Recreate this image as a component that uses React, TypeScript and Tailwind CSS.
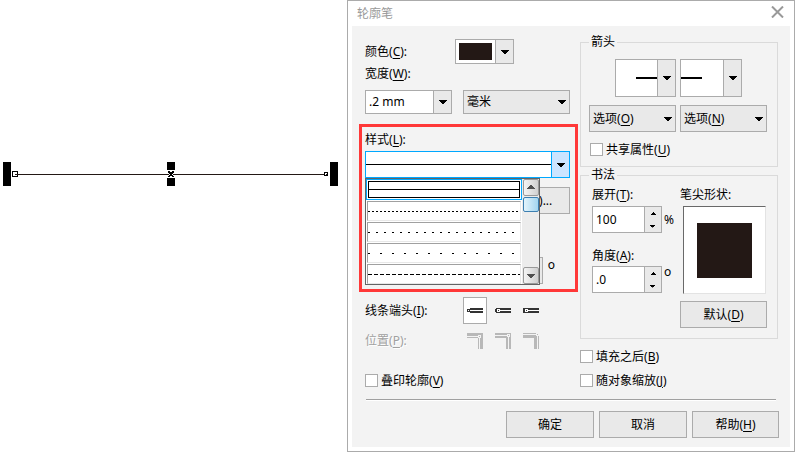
import { useState } from "react";
import type { ReactNode } from "react";

const LINE_STYLES = [
  { id: "solid", dash: "" },
  { id: "fine", dash: "2 2" },
  { id: "dotted", dash: "2 6" },
  { id: "sparse", dash: "2 10" },
  { id: "dashed", dash: "4 2" },
];

// label text with its underlined access key: 颜色(C):
function Key({ text, k, end = "" }: { text: string; k: string; end?: string }) {
  return (
    <span className="whitespace-nowrap">
      {text}(<u className="underline-offset-2">{k}</u>){end}
    </span>
  );
}

function Down() {
  return (
    <svg width="8" height="4" fill="currentColor" shapeRendering="crispEdges" className="shrink-0">
      <path d="M0 0h8v1H7v1H6v1H5v1H3V3H2V2H1V1H0z" />
    </svg>
  );
}

function Up() {
  return (
    <svg width="5" height="3" shapeRendering="crispEdges">
      <path d="M2 0h1v1h1v1h1v1H0V2h1V1h1z" />
    </svg>
  );
}

function DropButton({ label }: { label: string }) {
  return (
    <button
      aria-label={label}
      className="flex w-[18px] shrink-0 items-center justify-center border-l border-[#ababab] bg-[#e9e9e9]"
    >
      <Down />
    </button>
  );
}

function PushButton({ children, className = "" }: { children: ReactNode; className?: string }) {
  return (
    <button className={"h-[27px] border border-[#ababab] bg-[#e9e9e9] " + className}>
      {children}
    </button>
  );
}

function OptionButton({ k }: { k: string }) {
  return (
    <button className="flex h-[27px] items-center justify-between border border-[#ababab] bg-[#e9e9e9] pr-[3px] pl-[3px]">
      <Key text="选项" k={k} />
      <Down />
    </button>
  );
}

function Spinner({ id, value, label }: { id: string; value: string; label?: string }) {
  return (
    <div className="flex h-[27px] w-[70px] border border-[#ababab] bg-white">
      <input
        id={id}
        aria-label={label}
        defaultValue={value}
        className="w-0 flex-1 pl-[3px] outline-none"
      />
      <div className="flex w-[17px] flex-col border-l border-[#ababab] bg-[#e9e9e9]">
        <button aria-label="增加" className="flex flex-1 items-center justify-center">
          <Up />
        </button>
        <button aria-label="减少" className="flex flex-1 rotate-180 items-center justify-center">
          <Up />
        </button>
      </div>
    </div>
  );
}

function Check({ text, k }: { text: string; k: string }) {
  return (
    <label className="flex h-[13px] items-center gap-[3px]">
      <input type="checkbox" className="size-[13px] appearance-none border border-[#ababab] bg-white checked:bg-[#555]" />
      <Key text={text} k={k} />
    </label>
  );
}

function CapIcon({ type }: { type: number }) {
  return (
    <svg width="16" height="5" shapeRendering="crispEdges">
      {type === 0 && <path d="M3 0h13v2H3zM3 3h13v2H3zM0 1h3v3H0z" fill="#333" />}
      {type === 1 && <path d="M1 0h15v5H1zM0 1h1v3H0z" fill="#333" />}
      {type === 2 && <path d="M0 0h16v5H0z" fill="#333" />}
      {type > 0 && <path d="M2 1h3v3H2zM5 2h11v1H5z" fill="#fff" />}
      <path d={type === 0 ? "M1 2h1v1H1z" : "M3 2h1v1H3z"} fill={type === 0 ? "#fff" : "#333"} />
    </svg>
  );
}

function CornerIcon({ type }: { type: number }) {
  return (
    <svg width="16" height="16" shapeRendering="crispEdges">
      <path d="M0 0h16v16h-5V5H0z" fill="#b8b8b8" />
      {type === 0 && <path d="M0 3h11v1H0zM12 5h1v11h-1zM11 2h3v3h-3z" fill="#f3f3f3" />}
      {type === 1 && <path d="M0 2h12v1H0zM13 4h1v12h-1zM12 1h3v3h-3z" fill="#f3f3f3" />}
      {type === 2 && <path d="M0 1h13v1H0zM14 3h1v13h-1zM13 0h3v3h-3z" fill="#f3f3f3" />}
      <path d={["M12 3h1v1h-1z", "M13 2h1v1h-1z", "M14 1h1v1h-1z"][type]} fill="#b8b8b8" />
    </svg>
  );
}

function Canvas() {
  return (
    <main className="pt-[162px] pl-[3px]">
      <svg width="335" height="24" shapeRendering="crispEdges">
        <path d="M0 0h8v24H0zM327 0h8v24h-8zM164 0h8v8h-8zM164 16h8v8h-8z" />
        <path d="M15 12h308v1H15z" fill="#231815" />
        <path d="M9.500 9.500h5v5h-5z" fill="#fff" stroke="#000" />
        <path d="M321.500 10.500h3v3h-3z" fill="#fff" stroke="#000" />
        <path d="M12 12h3v1h-3zM323 12h1v1h-1z" fill="#231815" />
        <path d="M165 9h2v1h2V9h2v2h-1v3h1v1h-2v-1h-2v1h-2v-1h1v-3h-1z" />
        <path d="M166 12h1v1h-1zM169 12h1v1h-1z" fill="#fff" />
      </svg>
    </main>
  );
}

function StyleList({ value, onPick }: { value: string; onPick: (id: string) => void }) {
  return (
    <div className="absolute top-full left-0 z-10 flex h-[107px] w-[175px] border border-[#646464] bg-white">
      <div role="listbox" aria-label="样式" className="flex flex-1 flex-col">
        {LINE_STYLES.map((s) => (
          <button
            key={s.id}
            role="option"
            aria-selected={s.id === value}
            aria-label={s.id}
            onClick={() => onPick(s.id)}
            className={
              s.id === value
                ? "h-[21px] border border-[#00a8ff] p-px"
                : "h-[21px] px-px pt-px"
            }
          >
            <span
              className={
                s.id === value
                  ? "flex h-full items-center border border-black"
                  : "flex h-full items-center border border-t-[#a0a0a0] border-r-[#e8e8e8] border-b-[#e8e8e8] border-l-[#a0a0a0]"
              }
            >
              <svg width="100%" height="1" shapeRendering="crispEdges">
                <line x1="0" x2="100%" y1="0.5" y2="0.5" stroke="#000" strokeDasharray={s.dash} />
              </svg>
            </span>
          </button>
        ))}
      </div>
      <div className="flex w-[17px] flex-col justify-between bg-[#ececec] pl-px text-[#505050]">
        <div className="flex flex-col gap-px">
          <button aria-label="向上" className="flex h-[17px] rotate-180 items-center justify-center rounded-xs border border-[#999] bg-linear-to-l from-[#f4f4f4] to-[#d0d0d0]">
            <Down />
          </button>
          <div className="h-[15px] rounded-xs border border-[#3c7fb1] bg-linear-to-r from-[#e3f4fc] to-[#a3d5ef]" />
        </div>
        <button aria-label="向下" className="flex h-[17px] items-center justify-center rounded-xs border border-[#999] bg-linear-to-r from-[#f4f4f4] to-[#d0d0d0]">
          <Down />
        </button>
      </div>
    </div>
  );
}

function LeftColumn() {
  const [style, setStyle] = useState("solid");
  const [open, setOpen] = useState(true);
  const [cap, setCap] = useState(0);
  const dash = LINE_STYLES.find((s) => s.id === style)?.dash;

  return (
    <div>
      <div className="pt-[13px] pr-2 pl-[6px]">
        <div className="flex h-[25px] items-center">
          <span className="w-[90px]">
            <Key text="颜色" k="C" end=":" />
          </span>
          <div className="flex h-full w-[59px] border border-[#ababab] bg-white">
            <div className="m-[3px] flex-1 bg-[#231815]" />
            <DropButton label="颜色" />
          </div>
        </div>
        <label htmlFor="width" className="mt-px flex h-[18px] items-center">
          <Key text="宽度" k="W" end=":" />
        </label>
        <div className="mt-[7px] flex h-6 gap-[11px]">
          <div className="flex w-[87px] border border-[#ababab] bg-white">
            <input id="width" defaultValue=".2 mm" className="w-0 flex-1 pl-[3px] outline-none" />
            <DropButton label="宽度" />
          </div>
          <div className="relative flex flex-1">
            <select aria-label="单位" className="w-full appearance-none border border-[#ababab] bg-[#e9e9e9] pl-[3px]">
              <option>毫米</option>
            </select>
            <span className="pointer-events-none absolute top-[10px] right-1">
              <Down />
            </span>
          </div>
        </div>
      </div>

      <section className="mt-[10px] border-3 border-[#ff3838] pt-1 pr-[5px] pb-[5px] pl-[3px]">
        <div className="flex h-[18px] items-center">
          <Key text="样式" k="L" end=":" />
        </div>
        <div className="relative mt-[2px]">
          <button
            aria-label="样式"
            onClick={() => setOpen(!open)}
            className="flex h-[27px] w-full border border-[#00a8ff] bg-white"
          >
            <span className="flex flex-1 items-center self-stretch">
              <svg width="100%" height="1" shapeRendering="crispEdges">
                <line x1="0" x2="100%" y1="0.5" y2="0.5" stroke="#000" strokeDasharray={dash} />
              </svg>
            </span>
            <span className="flex w-[18px] items-center justify-center self-stretch border-l border-[#00a8ff] bg-[#cce4ff]">
              <Down />
            </span>
          </button>
          {open && <StyleList value={style} onPick={setStyle} />}
        </div>
        <div className="mt-[9px] flex justify-end">
          <PushButton className="w-[107px]">
            <Key text="编辑样式" k="E" end="..." />
          </PushButton>
        </div>
        <div className="mt-[43px] flex justify-end gap-[5px] pr-[15px]">
          <Spinner id="miter" value="5.0" label="斜接限制" />
          <span className="leading-4">o</span>
        </div>
      </section>

      <div className="pt-[5px] pl-[6px]">
        <div className="flex items-center">
          <span className="w-[98px]">
            <Key text="线条端头" k="I" end=":" />
          </span>
          <div className="flex gap-1">
            {[0, 1, 2].map((i) => (
              <button
                key={i}
                aria-label={"线条端头 " + (i + 1)}
                onClick={() => setCap(i)}
                className={
                  cap === i
                    ? "flex h-[27px] w-6 items-center justify-center border border-[#ababab] bg-white"
                    : "flex h-[27px] w-6 items-center justify-center"
                }
              >
                <CapIcon type={i} />
              </button>
            ))}
          </div>
        </div>
        <div className="mt-2 flex h-[18px] items-center">
          <span className="w-[98px] text-[#a0a0a0] text-shadow-[1px_1px_0_#fff]">
            <Key text="位置" k="P" end=":" />
          </span>
          <div className="flex gap-1">
            {[0, 1, 2].map((i) => (
              <button key={i} disabled aria-label={"位置 " + (i + 1)} className="flex w-6 justify-center">
                <CornerIcon type={i} />
              </button>
            ))}
          </div>
        </div>
        <div className="mt-6">
          <Check text="叠印轮廓" k="V" />
        </div>
      </div>
    </div>
  );
}

function RightColumn() {
  return (
    <div className="pt-2">
      <fieldset className="border border-[#dadada] pt-[9px] pr-[10px] pb-[10px] pl-2">
        <legend className="h-4 px-[2px] leading-4">箭头</legend>
        <div className="grid grid-cols-2 gap-1">
          <div className="flex h-[38px] w-[61px] justify-self-end border border-[#ababab] bg-white">
            <div className="flex flex-1 items-center justify-end">
              <div className="h-[2px] w-[21px] bg-black" />
            </div>
            <DropButton label="起始箭头" />
          </div>
          <div className="flex h-[38px] w-[62px] border border-[#ababab] bg-white">
            <div className="flex flex-1 items-center">
              <div className="h-[2px] w-[21px] bg-black" />
            </div>
            <DropButton label="终止箭头" />
          </div>
        </div>
        <div className="mt-2 grid grid-cols-2 gap-1">
          <OptionButton k="O" />
          <OptionButton k="N" />
        </div>
        <div className="mt-[11px] pl-px">
          <Check text="共享属性" k="U" />
        </div>
      </fieldset>

      <fieldset className="border border-[#dadada] pt-[3px] pr-[10px] pb-[10px] pl-2">
        <legend className="h-4 px-[2px] leading-4">书法</legend>
        <div className="grid grid-cols-2 gap-1">
          <div className="pl-[3px]">
            <label htmlFor="stretch" className="flex h-[18px] items-center">
              <Key text="展开" k="T" end=":" />
            </label>
            <div className="mt-[2px] flex items-center gap-[2px]">
              <Spinner id="stretch" value="100" />
              <span>%</span>
            </div>
            <label htmlFor="angle" className="mt-[14px] flex h-[18px] items-center">
              <Key text="角度" k="A" end=":" />
            </label>
            <div className="mt-px flex gap-[2px]">
              <Spinner id="angle" value=".0" />
              <span className="leading-none">o</span>
            </div>
          </div>
          <div>
            <div className="flex h-[18px] items-center">笔尖形状:</div>
            <div className="mt-[2px] mr-px ml-[3px] flex h-[88px] items-center justify-center border border-t-[#696969] border-r-[#e3e3e3] border-b-[#e3e3e3] border-l-[#696969] bg-white">
              <div className="size-[55px] bg-[#231815]" />
            </div>
            <PushButton className="mt-[7px] w-full">
              <Key text="默认" k="D" />
            </PushButton>
          </div>
        </div>
      </fieldset>

      <div className="mt-[11px] flex flex-col gap-[11px]">
        <Check text="填充之后" k="B" />
        <Check text="随对象缩放" k="J" />
      </div>
    </div>
  );
}

function App() {
  return (
    <div className="grid grid-cols-[347fr_448fr] bg-white font-['Noto_Sans','Noto_Sans_CJK_SC',sans-serif] text-[12px] leading-4 text-black">
      <Canvas />
      <div role="dialog" aria-label="轮廓笔" className="border border-[#ababab] px-1 pb-1">
        <header className="flex h-[25px] items-center justify-between pr-[6px] pl-[5px] text-[#999]">
          <h1>轮廓笔</h1>
          <button aria-label="关闭" className="self-start pt-[5px]">
            <svg width="13" height="12" stroke="#999" strokeWidth="2" fill="none">
              <path d="M1 .5l11 11M12 .5l-11 11" />
            </svg>
          </button>
        </header>
        <div className="bg-[#f3f3f3] pb-[9px]">
          <div className="grid grid-cols-[219fr_198fr] gap-[2px] pr-3 pl-[7px]">
            <LeftColumn />
            <RightColumn />
          </div>
          <hr className="mt-3 mr-[14px] ml-[14px] h-[2px] border-t border-b border-t-[#a0a0a0] border-b-white" />
          <footer className="mt-[10px] flex justify-end gap-[5px] pr-[11px]">
            <PushButton className="w-[88px]">确定</PushButton>
            <PushButton className="w-[88px]">取消</PushButton>
            <PushButton className="w-[87px]">
              <Key text="帮助" k="H" />
            </PushButton>
          </footer>
        </div>
      </div>
    </div>
  );
}

export default App;
